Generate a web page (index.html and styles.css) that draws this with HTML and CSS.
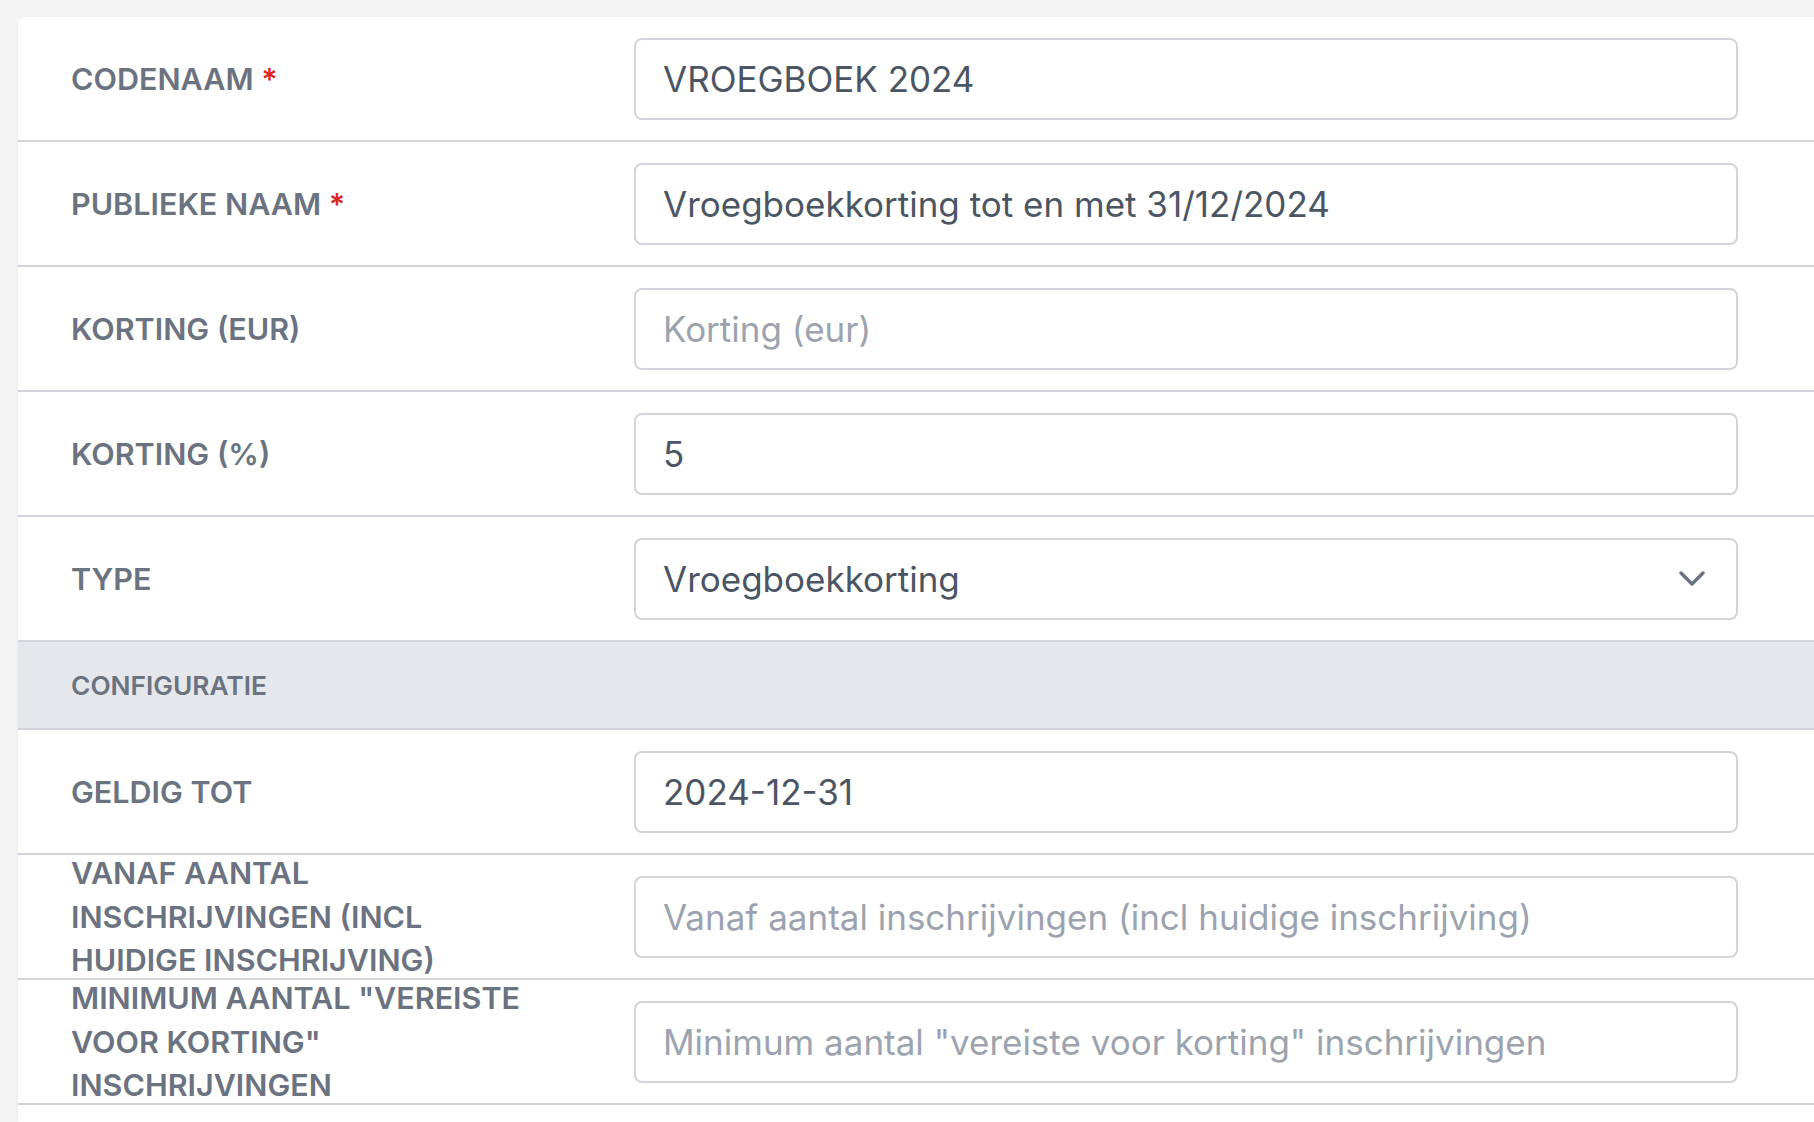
FILE: index.html
```html
<!DOCTYPE html>
<html lang="nl">
<head>
<meta charset="utf-8">
<title>Korting</title>
<link rel="stylesheet" href="styles.css">
</head>
<body>
<div class="card">
  <div class="row">
    <div class="label">CODENAAM <span class="req">*</span></div>
    <div class="field"><div class="input">VROEGBOEK 2024</div></div>
  </div>
  <div class="row">
    <div class="label">PUBLIEKE NAAM <span class="req">*</span></div>
    <div class="field"><div class="input">Vroegboekkorting tot en met 31/12/2024</div></div>
  </div>
  <div class="row">
    <div class="label">KORTING (EUR)</div>
    <div class="field"><div class="input placeholder">Korting (eur)</div></div>
  </div>
  <div class="row">
    <div class="label">KORTING (%)</div>
    <div class="field"><div class="input">5</div></div>
  </div>
  <div class="row">
    <div class="label">TYPE</div>
    <div class="field">
      <div class="input select">
        <span>Vroegboekkorting</span>
        <svg class="chev" width="26" height="16" viewBox="0 0 26 16"><path d="M2 2 L13 13 L24 2" fill="none" stroke="#6b7280" stroke-width="3.4" stroke-linecap="round" stroke-linejoin="round"/></svg>
      </div>
    </div>
  </div>
  <div class="section">CONFIGURATIE</div>
  <div class="row">
    <div class="label">GELDIG TOT</div>
    <div class="field"><div class="input">2024-12-31</div></div>
  </div>
  <div class="row">
    <div class="label">VANAF AANTAL INSCHRIJVINGEN (INCL HUIDIGE INSCHRIJVING)</div>
    <div class="field"><div class="input placeholder">Vanaf aantal inschrijvingen (incl huidige inschrijving)</div></div>
  </div>
  <div class="row">
    <div class="label">MINIMUM AANTAL "VEREISTE VOOR KORTING" INSCHRIJVINGEN</div>
    <div class="field"><div class="input placeholder">Minimum aantal "vereiste voor korting" inschrijvingen</div></div>
  </div>
</div>
</body>
</html>
```
FILE: styles.css
```css
html, body {
  margin: 0;
  padding: 0;
  background: #f4f4f5;
  overflow: hidden;
}
body {
  font-family: Inter, "Noto Sans", sans-serif;
  height: 1122px;
}
.card {
  margin: 17px 0 0 18px;
  background: #ffffff;
  border-radius: 8px 0 0 0;
  box-shadow: 0 1px 3px rgba(0, 0, 0, 0.08);
  height: 1105px;
}
.row {
  display: flex;
  align-items: center;
  height: 125px;
  box-sizing: border-box;
  border-bottom: 2px solid #d1d5db;
}
.label {
  width: 469px;
  padding: 0 94px 0 53px;
  font-size: 30.5px;
  font-weight: 600;
  line-height: 43.5px;
  color: #6b7280;
  flex: none;
}
.req {
  color: #dc2626;
}
.field {
  width: 1104px;
  flex: none;
}
.input {
  height: 82px;
  box-sizing: border-box;
  border: 2px solid #d1d5db;
  border-radius: 8px;
  padding: 1px 27px 0 27px;
  display: flex;
  align-items: center;
  font-size: 35px;
  color: #4b5563;
  white-space: nowrap;
}
.placeholder {
  color: #9ca3af;
}
.select {
  justify-content: space-between;
  padding-right: 31px;
}
.chev {
  margin-top: -1px;
}
.section {
  height: 88px;
  box-sizing: border-box;
  border-bottom: 2px solid #d1d5db;
  background: #e5e7eb;
  display: flex;
  align-items: center;
  padding-left: 53px;
  font-size: 26.3px;
  font-weight: 600;
  color: #6b7280;
}
```
